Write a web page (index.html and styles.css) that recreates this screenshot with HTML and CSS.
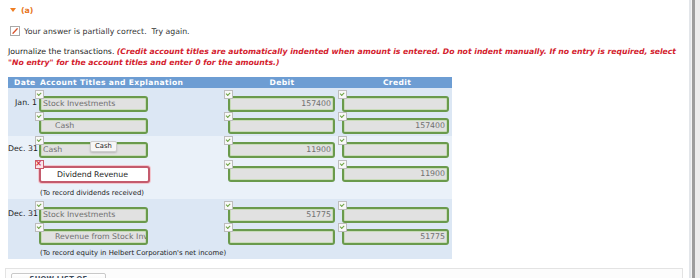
FILE: index.html
```html
<!DOCTYPE html>
<html lang="en">
<head>
<meta charset="utf-8">
<title>Journal entry</title>
<link rel="stylesheet" href="styles.css">
</head>
<body>
<div class="frame">
  <main class="content">
    <div class="part"><span class="tri"></span><span class="part-label">(a)</span></div>

    <div class="feedback">
      <svg class="fb-icon" viewBox="0 0 10 10" width="10" height="10">
        <rect x="0.5" y="0.5" width="9" height="9" fill="#fff" stroke="#a9a9a9"/>
        <path d="M3 7.2 L7.2 2.8" stroke="#d8522c" stroke-width="1.3" stroke-linecap="round"/>
      </svg>
      <span>Your answer is partially correct.&nbsp; Try again.</span>
    </div>

    <p class="instr">Journalize the transactions. <em class="note">(Credit account titles are automatically indented when amount is entered. Do not indent manually. If no entry is required, select "No entry" for the account titles and enter 0 for the amounts.)</em></p>

    <div class="journal">
      <div class="jhead">
        <span class="c-date">Date</span>
        <span class="c-acct">Account Titles and Explanation</span>
        <span class="c-debit">Debit</span>
        <span class="c-credit">Credit</span>
      </div>

      <div class="group g-dark g1">
        <div class="line">
          <div class="c-date">Jan. 1</div>
          <div class="c-acct"><div class="field"><span class="val">Stock Investments</span></div></div>
          <div class="c-debit"><div class="field num"><span class="val">157400</span></div></div>
          <div class="c-credit"><div class="field num"><span class="val"></span></div></div>
        </div>
        <div class="line">
          <div class="c-date"></div>
          <div class="c-acct"><div class="field indent"><span class="val">Cash</span></div></div>
          <div class="c-debit"><div class="field num"><span class="val"></span></div></div>
          <div class="c-credit"><div class="field num"><span class="val">157400</span></div></div>
        </div>
      </div>

      <div class="group g-light g2">
        <div class="line">
          <div class="c-date">Dec. 31</div>
          <div class="c-acct has-tip"><div class="field"><span class="val">Cash</span></div><span class="tip">Cash</span></div>
          <div class="c-debit"><div class="field num"><span class="val">11900</span></div></div>
          <div class="c-credit"><div class="field num"><span class="val"></span></div></div>
        </div>
        <div class="line line-bad">
          <div class="c-date"></div>
          <div class="c-acct"><div class="field bad indent"><span class="val">Dividend Revenue</span></div></div>
          <div class="c-debit"><div class="field num"><span class="val"></span></div></div>
          <div class="c-credit"><div class="field num"><span class="val">11900</span></div></div>
        </div>
        <div class="line memo-line">
          <div class="memo">(To record dividends received)</div>
        </div>
      </div>

      <div class="group g-dark g3">
        <div class="line">
          <div class="c-date">Dec. 31</div>
          <div class="c-acct"><div class="field"><span class="val">Stock Investments</span></div></div>
          <div class="c-debit"><div class="field num"><span class="val">51775</span></div></div>
          <div class="c-credit"><div class="field num"><span class="val"></span></div></div>
        </div>
        <div class="line">
          <div class="c-date"></div>
          <div class="c-acct"><div class="field indent"><span class="val">Revenue from Stock Investments</span></div></div>
          <div class="c-debit"><div class="field num"><span class="val"></span></div></div>
          <div class="c-credit"><div class="field num"><span class="val">51775</span></div></div>
        </div>
        <div class="line memo-line">
          <div class="memo">(To record equity in Helbert Corporation's net income)</div>
        </div>
      </div>
    </div>

    <div class="accounts">
      <span class="btn">SHOW LIST OF ACCOUNTS</span>
    </div>
  </main>
  <div class="scrollbar"></div>
</div>
</body>
</html>
```

FILE: styles.css
```css
* { box-sizing: border-box; }

body {
  margin: 0;
  background: #fff;
  font-family: "DejaVu Sans", Verdana, sans-serif;
  color: #222;
}

.frame {
  display: flex;
  width: 700px;
  height: 278px;
  overflow: hidden;
}

.content {
  width: 688px;
  padding: 4px 0 0 8px;
}

.scrollbar {
  width: 12px;
  background: linear-gradient(to right,
    #fff 0 1px, #e3e6ea 1px 3px, #f4f4f4 3px 4px,
    #9d9d9d 4px 7px, #ececec 7px 12px);
}

/* part header */
.part {
  display: flex;
  align-items: center;
  gap: 5px;
  height: 12px;
  padding-left: 2px;
}
.tri {
  width: 0;
  height: 0;
  border-left: 3.5px solid transparent;
  border-right: 3.5px solid transparent;
  border-top: 4px solid #ef7d22;
}
.part-label {
  color: #e8731a;
  font-weight: bold;
  font-size: 7.8px;
}

/* feedback */
.feedback {
  display: flex;
  align-items: center;
  gap: 4px;
  margin-top: 9px;
  height: 12px;
  padding-left: 2px;
  font-size: 7.8px;
  color: #333;
}
.fb-icon { display: block; }

/* instructions */
.instr {
  margin: 10px 0 0;
  width: 676px;
  font-size: 7.8px;
  line-height: 10.5px;
  color: #222;
}
.note {
  color: #d3212d;
  font-weight: bold;
  font-style: italic;
  font-size: 7.7px;
}

/* journal table */
.journal {
  margin-top: 9px;
  width: 444px;
}
.jhead, .line {
  display: grid;
  grid-template-columns: 31px 189px 114px 110px;
}
.jhead {
  height: 11px;
  background: #6d9dd3;
  color: #fff;
  font-weight: bold;
  font-size: 7.6px;
  letter-spacing: 0.35px;
  line-height: 11px;
  white-space: nowrap;
}
.jhead .c-date { padding-left: 6px; }
.jhead .c-acct { padding-left: 1px; }
.jhead .c-debit { text-align: center; padding-right: 6px; }
.jhead .c-credit { text-align: center; }

.group {
  display: flex;
  flex-direction: column;
  gap: 6px;
}
.g-dark { background: #dce7f4; }
.g-light { background: #eaf1f9; }
.g1 { padding: 8px 0 2px; }
.g2 { padding: 6px 0 0; }
.g3 { padding: 8px 0 0; }

.line { align-items: start; }
.line-bad { margin-top: 2px; }

.line .c-date {
  font-size: 7.8px;
  line-height: 10px;
  text-align: right;
  white-space: nowrap;
  padding: 2px 2px 0 0;
  color: #222;
}

.has-tip { position: relative; }

.field {
  position: relative;
  width: 109px;
  height: 16px;
  border: 2px solid #6a9a4c;
  border-radius: 3px;
  background: #e1e1e1;
  box-shadow: inset 0 0 0 1px #c8dbb8;
  font-size: 7.8px;
  line-height: 12px;
  color: #6f6f6f;
}
.c-debit .field, .c-credit .field { width: 107px; }

.val {
  display: block;
  height: 12px;
  overflow: hidden;
  white-space: nowrap;
  padding: 0 2px;
}
.num .val { text-align: right; }
.indent .val { padding-left: 14px; }

/* validation marks */
.field::before {
  content: "";
  position: absolute;
  left: -6px;
  top: -8px;
  width: 7px;
  height: 7px;
  border: 1px solid #bdbdbd;
  background: #f8f8f8;
}
.field::after {
  content: "";
  position: absolute;
  left: -4.2px;
  top: -6.4px;
  width: 3.2px;
  height: 1.8px;
  border-left: 1px solid #6ea544;
  border-bottom: 1px solid #6ea544;
  transform: rotate(-45deg);
}

.field.bad {
  width: 111px;
  height: 17px;
  background: #fff;
  border-color: #c45b6d;
  box-shadow: 0 0 0 1px #f2c7cf;
  color: #222;
  line-height: 13px;
}
.field.bad .val { height: 13px; padding-left: 16px; }
.field.bad::before {
  border-color: #c95b6b;
  background: #fbe4e7;
}
.field.bad::after {
  content: "\00d7";
  left: -6px;
  top: -8px;
  width: 7px;
  height: 7px;
  border: none;
  transform: none;
  font-size: 8px;
  line-height: 7px;
  text-align: center;
  color: #d02c3e;
  font-weight: bold;
}

.tip {
  position: absolute;
  left: 51px;
  top: -1px;
  height: 11px;
  padding: 0 4px;
  font-size: 6.8px;
  line-height: 9px;
  color: #222;
  background: #f6f6f6;
  border: 1px solid #cdcdcd;
  border-radius: 2px;
  box-shadow: 0 1px 2px rgba(0, 0, 0, 0.18);
}

.memo-line { margin-top: -1px; }
.g3 .memo-line { margin-top: -3px; }
.memo {
  grid-column: 2 / span 3;
  padding-left: 1px;
  font-size: 6.9px;
  line-height: 11px;
  color: #222;
}

/* bottom */
.accounts {
  margin-top: 9px;
  margin-left: -3px;
  width: 678px;
  height: 20px;
  border: 1px solid #e3e3e3;
  border-bottom: none;
  background: #fcfcfc;
  padding: 4px 0 0 5px;
}
.btn {
  display: inline-block;
  width: 95px;
  height: 14px;
  border: 1px solid #c9c9c9;
  border-radius: 2px;
  background: linear-gradient(#fff, #ededed);
  font-size: 6.8px;
  font-weight: bold;
  line-height: 9px;
  padding-top: 1px;
  color: #3d4b5c;
  text-align: center;
  letter-spacing: 0.2px;
}
```
